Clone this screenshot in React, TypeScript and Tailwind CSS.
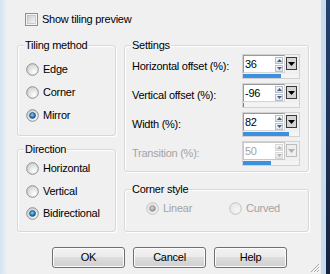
import React from "react";

function Radio({ checked, disabled }: { checked?: boolean; disabled?: boolean }) {
  const id = React.useId().replace(/:/g, "");
  return (
    <svg width="13" height="13" viewBox="0 0 13 13" className="shrink-0">
      <defs>
        <radialGradient id={"rf" + id} cx="0.65" cy="0.7" r="0.7">
          <stop offset="0" stopColor={disabled ? "#f6f6f6" : "#ffffff"} />
          <stop offset="1" stopColor={disabled ? "#e6e6e6" : "#cfd1d4"} />
        </radialGradient>
        <radialGradient id={"rd" + id} cx="0.45" cy="0.4" r="0.6">
          <stop offset="0" stopColor={disabled ? "#d8d8d8" : "#8fd0f5"} />
          <stop offset="0.6" stopColor={disabled ? "#a8a8a8" : "#2a82c2"} />
          <stop offset="1" stopColor={disabled ? "#8c8c8c" : "#104b7c"} />
        </radialGradient>
      </defs>
      <circle cx="6.5" cy="6.5" r="5.8" fill={`url(#rf${id})`} stroke={disabled ? "#c2c2c2" : "#8e8f8f"} strokeWidth="1" />
      {checked && <circle cx="6.5" cy="6.5" r="3" fill={`url(#rd${id})`} stroke={disabled ? "#9a9a9a" : "#1b4c78"} strokeWidth="0.6" />}
    </svg>
  );
}

function RadioRow({ label, checked, h }: { label: string; checked?: boolean; h: string }) {
  return (
    <div className={`flex items-center ${h} pl-[8px]`}>
      <Radio checked={checked} />
      <span className="ml-[4px] text-black">{label}</span>
    </div>
  );
}

function Group({ label, className, children }: { label: string; className: string; children?: React.ReactNode }) {
  return (
    <div className={`relative border border-[#d5d9dc] rounded-[3px] shadow-[inset_1px_1px_0_#ffffff,1px_1px_0_#ffffff] ${className}`}>
      <span className="absolute left-[6px] top-[-8px] px-[1px] bg-[#f0f0f0] leading-[14px] text-black">{label}</span>
      {children}
    </div>
  );
}

function SpinField({ value, pct, disabled }: { value: string; pct: number; disabled?: boolean }) {
  const arrow = disabled ? "#b5b5b5" : "#4a5c78";
  return (
    <div className="w-[58px] h-[25px] border border-[#d2d2d2] flex flex-col">
      <div className="flex h-[18px]">
        <div className={`w-[42px] h-[18px] bg-white border ${disabled ? "border-[#c8c8c8]" : "border-[#9a9a9a] border-r-[#d6d6d6] border-b-[#d6d6d6]"} flex items-center`}>
          <span className={`flex-1 pl-[1px] leading-[14px] ${disabled ? "text-[#a3a3a3]" : "text-black"}`}>{value}</span>
          <div className="flex flex-col gap-[1px] mr-[1px]">
            <div className={`w-[8px] h-[7px] border ${disabled ? "border-[#d9d9d9]" : "border-[#b4bfcc]"} bg-gradient-to-b from-[#f4f6f9] to-[#dde3ea] flex items-center justify-center`}>
              <svg width="5" height="3" viewBox="0 0 5 3"><path d="M0 3 L2.5 0 L5 3 Z" fill={arrow} /></svg>
            </div>
            <div className={`w-[8px] h-[7px] border ${disabled ? "border-[#d9d9d9]" : "border-[#b4bfcc]"} bg-gradient-to-b from-[#f4f6f9] to-[#dde3ea] flex items-center justify-center`}>
              <svg width="5" height="3" viewBox="0 0 5 3"><path d="M0 0 L5 0 L2.5 3 Z" fill={arrow} /></svg>
            </div>
          </div>
        </div>
        <div className={`ml-[1px] mt-[2px] w-[11px] h-[13px] border ${disabled ? "border-[#bdbdbd] bg-[#eeeeee]" : "border-[#3a3a3a] bg-[#d6d6d6]"} flex items-center justify-center`}>
          <svg width="7" height="4" viewBox="0 0 7 4"><path d="M0 0 L7 0 L3.5 4 Z" fill={disabled ? "#b0b0b0" : "#000000"} /></svg>
        </div>
      </div>
      <div className="mt-[1px] h-[4px] w-full bg-[#f4f4f4]">
        <div className="h-full bg-[#3d8fe0]" style={{ width: `${pct}%` }} />
      </div>
    </div>
  );
}

function SettingRow({ label, value, pct, disabled }: { label: string; value: string; pct: number; disabled?: boolean }) {
  return (
    <div className="flex items-center h-[25px]">
      <span className={`w-[117px] pl-[7px] ${disabled ? "text-[#a3a3a3]" : "text-black"}`}>{label}</span>
      <SpinField value={value} pct={pct} disabled={disabled} />
    </div>
  );
}

function Button({ label }: { label: string }) {
  return (
    <div className="w-[73px] h-[21px] rounded-[3px] border border-[#707070] bg-[linear-gradient(#f2f2f2_0%,#ebebeb_50%,#dddddd_50%,#cfcfcf_100%)] shadow-[inset_0_0_0_1px_#fcfcfc] flex items-center justify-center text-black">
      {label}
    </div>
  );
}

export default function App() {
  return (
    <div
      className="w-[330px] h-[274px] flex overflow-hidden bg-[#f0f0f0] text-[11px] tracking-[-0.25px] leading-[13px]"
      style={{ fontFamily: '"Liberation Sans", Arial, sans-serif' }}
    >
      <div className="w-[7px] h-full bg-gradient-to-r from-[#d5e3f2] to-[#edf0f4]" />
      <div className="relative w-[314px] h-full flex flex-col">
        <div className="mt-[13px] ml-[18px] flex items-center h-[13px]">
          <svg width="13" height="13" viewBox="0 0 13 13" className="shrink-0">
            <defs>
              <linearGradient id="cb" x1="0" y1="0" x2="1" y2="1">
                <stop offset="0" stopColor="#c9cdd2" />
                <stop offset="1" stopColor="#f7f7f7" />
              </linearGradient>
            </defs>
            <rect x="0.5" y="0.5" width="12" height="12" fill="#f4f4f4" stroke="#8e8f8f" />
            <rect x="2.5" y="2.5" width="8" height="8" fill="url(#cb)" stroke="#aeb3b9" strokeWidth="0.6" />
          </svg>
          <span className="ml-[4px] text-black">Show tiling preview</span>
        </div>

        <div className="mt-[19px] ml-[10px] flex gap-[8px]">
          <div className="w-[99px] flex flex-col">
            <Group label="Tiling method" className="h-[91px] pt-[12px]">
              <RadioRow label="Edge" h="h-[23px]" />
              <RadioRow label="Corner" h="h-[23px]" />
              <RadioRow label="Mirror" checked h="h-[23px]" />
            </Group>
            <Group label="Direction" className="mt-[13px] h-[83px] pt-[7px]">
              <RadioRow label="Horizontal" h="h-[23px]" />
              <RadioRow label="Vertical" h="h-[22px]" />
              <RadioRow label="Bidirectional" checked h="h-[22px]" />
            </Group>
          </div>
          <div className="w-[185px] flex flex-col">
            <Group label="Settings" className="h-[127px] pt-[8px] flex flex-col gap-[4px]">
              <SettingRow label="Horizontal offset (%):" value="36" pct={68} />
              <SettingRow label="Vertical offset (%):" value="-96" pct={2} />
              <SettingRow label="Width (%):" value="82" pct={82} />
              <SettingRow label="Transition (%):" value="50" pct={50} disabled />
            </Group>
            <Group label="Corner style" className="mt-[17px] h-[43px] pt-[12px]">
              <div className="flex items-center h-[13px] pl-[21px]">
                <Radio checked disabled />
                <span className="ml-[4px] w-[66px] text-[#a3a3a3]">Linear</span>
                <Radio disabled />
                <span className="ml-[4px] text-[#a3a3a3]">Curved</span>
              </div>
            </Group>
          </div>
        </div>

        <div className="mt-[15px] ml-[45px] flex gap-[8px]">
          <Button label="OK" />
          <Button label="Cancel" />
          <Button label="Help" />
        </div>

        <svg width="12" height="12" viewBox="0 0 12 12" className="absolute right-[1px] bottom-[1px]">
          <path d="M11 3 L3 11 M11 6 L6 11 M11 9 L9 11" stroke="#a9a9a9" strokeWidth="1" />
          <path d="M12 4 L4 12 M12 7 L7 12 M12 10 L10 12" stroke="#ffffff" strokeWidth="1" />
        </svg>
      </div>
      <div className="w-[5px] h-full bg-[#c9dbee]" />
      <div className="w-[4px] h-full bg-gradient-to-b from-[#24406e] to-[#17223b]" />
    </div>
  );
}
